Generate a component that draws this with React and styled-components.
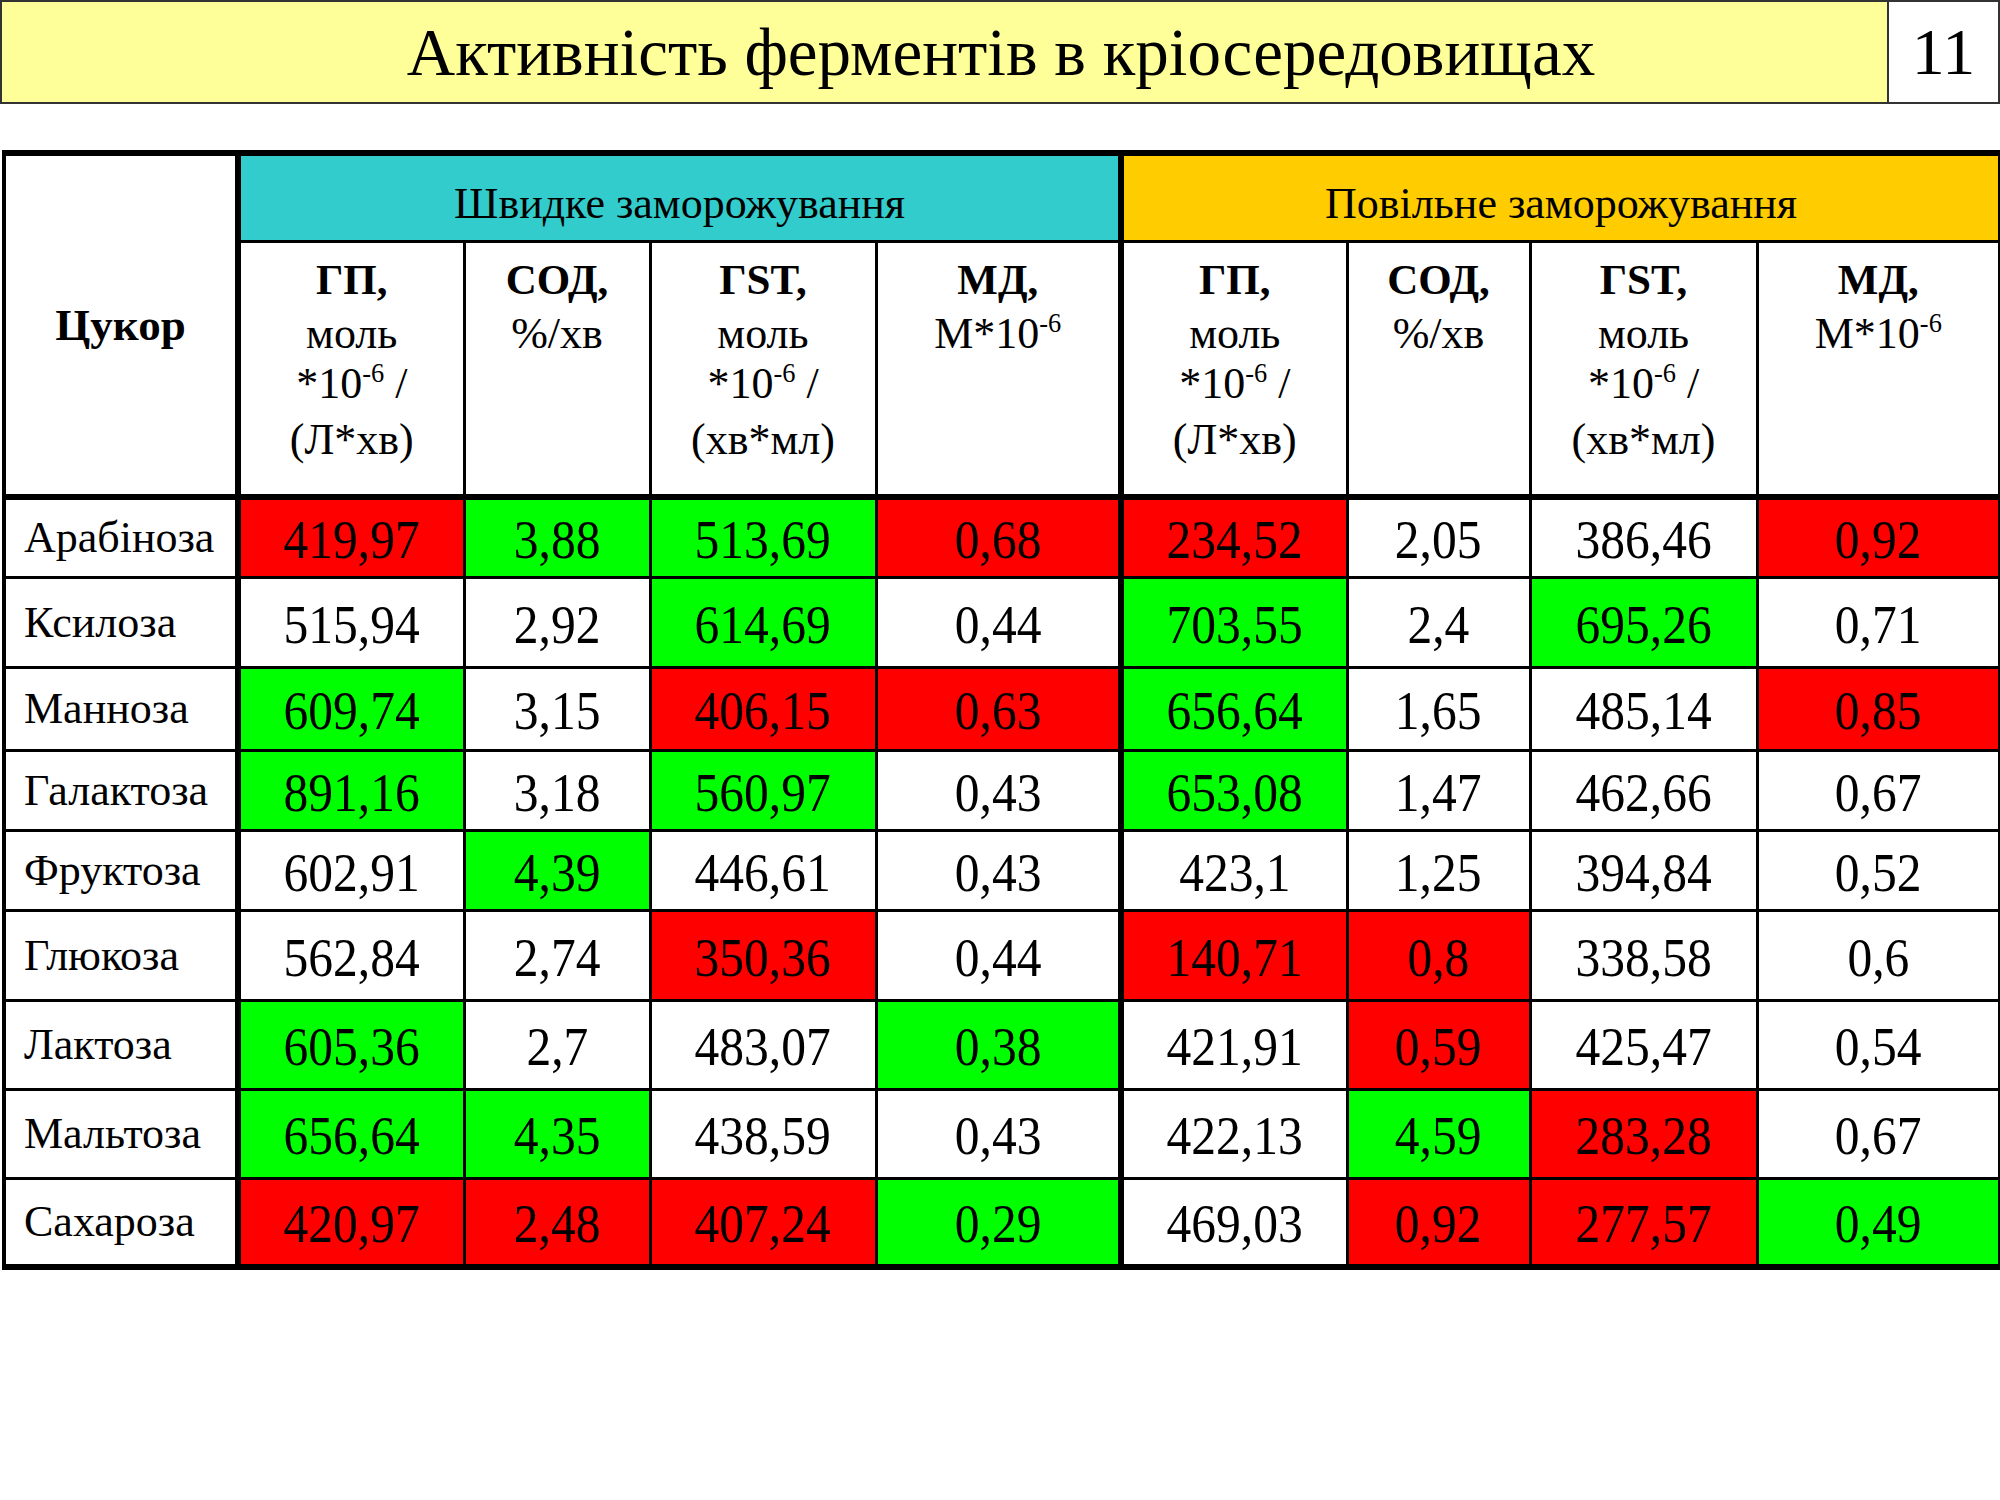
import React from "react";
import styled, { createGlobalStyle } from "styled-components";

const Global = createGlobalStyle`
  html, body { margin: 0; padding: 0; background: #ffffff; }
  body { font-family: "Liberation Serif", "Times New Roman", serif; color: #000; }
`;

const Page = styled.div`
  width: 2000px;
  height: 1500px;
  background: #fff;
  display: flex;
  flex-direction: column;
`;

const TitleBar = styled.div`
  display: flex;
  height: 104px;
  box-sizing: border-box;
`;

const TitleBox = styled.div`
  flex: 1;
  background: #ffff99;
  border: 2px solid #333;
  box-sizing: border-box;
  display: flex;
  align-items: center;
  justify-content: center;
  padding-left: 113px;
  font-size: 67px;
  line-height: 1;
`;

const NumberBox = styled.div`
  width: 111px;
  background: #fff;
  border: 2px solid #333;
  border-left: none;
  box-sizing: border-box;
  display: flex;
  align-items: center;
  justify-content: center;
  font-size: 66px;
  line-height: 1;
`;

const TableWrap = styled.div`
  margin-top: 46px;
  padding-left: 2px;
`;

const Table = styled.table`
  border-collapse: collapse;
  table-layout: fixed;
  width: 1996px;
  font-family: "Liberation Serif", "Times New Roman", serif;
`;

const GroupCell = styled.th`
  background: ${(p) => p.$bg};
  font-weight: normal;
  font-size: 44px;
  height: 73px;
  padding: 11px 0 0 0;
  text-align: center;
  vertical-align: middle;
  border-top: 6px solid #000;
  border-bottom: 3px solid #000;
  border-left: 6px solid #000;
  border-right: ${(p) => (p.$last ? "4px" : "6px")} solid #000;
  white-space: nowrap;
`;

const CornerCell = styled.th`
  font-size: 45px;
  font-weight: bold;
  text-align: center;
  vertical-align: middle;
  border-top: 6px solid #000;
  border-left: 4px solid #000;
  border-right: 6px solid #000;
  border-bottom: 6px solid #000;
  padding: 0;
`;

const SubCell = styled.th`
  font-weight: normal;
  font-size: 44px;
  vertical-align: top;
  text-align: center;
  height: 251px;
  padding: 0;
  border-bottom: 6px solid #000;
  border-left: ${(p) => (p.$thickLeft ? "6px" : "3px")} solid #000;
  border-right: ${(p) => (p.$last ? "4px" : "3px")} solid #000;
`;

const HeadLine = styled.div`
  height: ${(p) => p.$h}px;
  line-height: ${(p) => p.$h}px;
  font-weight: ${(p) => (p.$bold ? "bold" : "normal")};
  font-size: ${(p) => (p.$bold ? "43px" : "44px")};
  margin-top: ${(p) => p.$top || 0}px;
  white-space: nowrap;
`;

const Sup = styled.sup`
  font-size: 0.6em;
  line-height: 0;
  vertical-align: 0;
  position: relative;
  top: -0.62em;
`;

const LabelCell = styled.td`
  font-size: 44px;
  text-align: left;
  padding: 0 0 0 18px;
  vertical-align: middle;
  border-left: 4px solid #000;
  border-right: 6px solid #000;
  border-bottom: ${(p) => (p.$lastRow ? "6px" : "3px")} solid #000;
  white-space: nowrap;
`;

const ValueCell = styled.td`
  font-size: 55px;
  text-align: center;
  vertical-align: middle;
  padding: 4px 0 0 0;
  background: ${(p) => (p.$mark === "r" ? "#ff0000" : p.$mark === "g" ? "#00ff00" : "#ffffff")};
  border-bottom: ${(p) => (p.$lastRow ? "6px" : "3px")} solid #000;
  border-left: ${(p) => (p.$thickLeft ? "6px" : "3px")} solid #000;
  border-right: ${(p) => (p.$last ? "4px" : "3px")} solid #000;
  white-space: nowrap;
`;

const Num = styled.span`
  display: inline-block;
  transform: scaleX(0.9);
  transform-origin: center;
`;

const Row = styled.tr`
  height: ${(p) => p.$h}px;
`;

const cols = [234, 226, 186, 226, 245, 226, 183, 227, 243];

const headers = [
  { title: "ГП,", lines: ["моль", "sup", "(Л*хв)"] },
  { title: "СОД,", lines: ["%/хв"] },
  { title: "ГST,", lines: ["моль", "sup", "(хв*мл)"] },
  { title: "МД,", lines: ["md"] },
];

const rows = [
  ["Арабіноза", [["419,97", "r"], ["3,88", "g"], ["513,69", "g"], ["0,68", "r"], ["234,52", "r"], ["2,05"], ["386,46"], ["0,92", "r"]], 80],
  ["Ксилоза", [["515,94"], ["2,92"], ["614,69", "g"], ["0,44"], ["703,55", "g"], ["2,4"], ["695,26", "g"], ["0,71"]], 90],
  ["Манноза", [["609,74", "g"], ["3,15"], ["406,15", "r"], ["0,63", "r"], ["656,64", "g"], ["1,65"], ["485,14"], ["0,85", "r"]], 83],
  ["Галактоза", [["891,16", "g"], ["3,18"], ["560,97", "g"], ["0,43"], ["653,08", "g"], ["1,47"], ["462,66"], ["0,67"]], 80],
  ["Фруктоза", [["602,91"], ["4,39", "g"], ["446,61"], ["0,43"], ["423,1"], ["1,25"], ["394,84"], ["0,52"]], 80],
  ["Глюкоза", [["562,84"], ["2,74"], ["350,36", "r"], ["0,44"], ["140,71", "r"], ["0,8", "r"], ["338,58"], ["0,6"]], 90],
  ["Лактоза", [["605,36", "g"], ["2,7"], ["483,07"], ["0,38", "g"], ["421,91"], ["0,59", "r"], ["425,47"], ["0,54"]], 89],
  ["Мальтоза", [["656,64", "g"], ["4,35", "g"], ["438,59"], ["0,43"], ["422,13"], ["4,59", "g"], ["283,28", "r"], ["0,67"]], 89],
  ["Сахароза", [["420,97", "r"], ["2,48", "r"], ["407,24", "r"], ["0,29", "g"], ["469,03"], ["0,92", "r"], ["277,57", "r"], ["0,49", "g"]], 89],
];

function HeaderContent({ h }) {
  const heights = [60, 47, 54, 58];
  return (
    <>
      <HeadLine $h={heights[0]} $bold $top={7}>
        {h.title}
      </HeadLine>
      {h.lines.map((l, i) => {
        const hh = heights[i + 1];
        if (l === "sup")
          return (
            <HeadLine key={i} $h={hh}>
              *10<Sup>-6</Sup> /
            </HeadLine>
          );
        if (l === "md")
          return (
            <HeadLine key={i} $h={hh}>
              М*10<Sup>-6</Sup>
            </HeadLine>
          );
        return (
          <HeadLine key={i} $h={hh}>
            {l}
          </HeadLine>
        );
      })}
    </>
  );
}

export default function App() {
  return (
    <Page>
      <Global />
      <TitleBar>
        <TitleBox>Активність ферментів в кріосередовищах</TitleBox>
        <NumberBox>11</NumberBox>
      </TitleBar>
      <TableWrap>
        <Table>
          <colgroup>
            {cols.map((w, i) => (
              <col key={i} style={{ width: w }} />
            ))}
          </colgroup>
          <thead>
            <tr>
              <CornerCell rowSpan={2}>Цукор</CornerCell>
              <GroupCell colSpan={4} $bg="#33cccc">
                Швидке заморожування
              </GroupCell>
              <GroupCell colSpan={4} $bg="#ffcc00" $last>
                Повільне заморожування
              </GroupCell>
            </tr>
            <tr>
              {[...headers, ...headers].map((h, i) => (
                <SubCell key={i} $thickLeft={i === 0 || i === 4} $last={i === 7}>
                  <HeaderContent h={h} />
                </SubCell>
              ))}
            </tr>
          </thead>
          <tbody>
            {rows.map(([label, vals, h], ri) => (
              <Row key={label} $h={h}>
                <LabelCell $lastRow={ri === rows.length - 1}>{label}</LabelCell>
                {vals.map(([v, m], ci) => (
                  <ValueCell
                    key={ci}
                    $mark={m}
                    $lastRow={ri === rows.length - 1}
                    $thickLeft={ci === 0 || ci === 4}
                    $last={ci === 7}
                  >
                    <Num>{v}</Num>
                  </ValueCell>
                ))}
              </Row>
            ))}
          </tbody>
        </Table>
      </TableWrap>
    </Page>
  );
}
